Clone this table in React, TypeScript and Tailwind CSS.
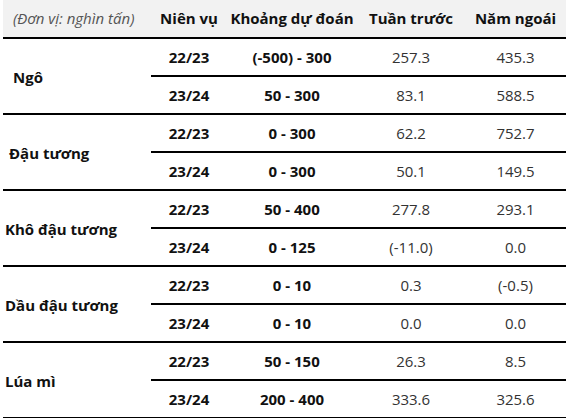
type Row = { season: string; range: string; lastWeek: string; lastYear: string };
type Group = { name: string; pad: string; rows: Row[] };

const groups: Group[] = [
  {
    name: "Ngô",
    pad: "pl-[10px]",
    rows: [
      { season: "22/23", range: "(-500) - 300", lastWeek: "257.3", lastYear: "435.3" },
      { season: "23/24", range: "50 - 300", lastWeek: "83.1", lastYear: "588.5" },
    ],
  },
  {
    name: "Đậu tương",
    pad: "pl-[6px]",
    rows: [
      { season: "22/23", range: "0 - 300", lastWeek: "62.2", lastYear: "752.7" },
      { season: "23/24", range: "0 - 300", lastWeek: "50.1", lastYear: "149.5" },
    ],
  },
  {
    name: "Khô đậu tương",
    pad: "pl-[2px]",
    rows: [
      { season: "22/23", range: "50 - 400", lastWeek: "277.8", lastYear: "293.1" },
      { season: "23/24", range: "0 - 125", lastWeek: "(-11.0)", lastYear: "0.0" },
    ],
  },
  {
    name: "Dầu đậu tương",
    pad: "pl-[2px]",
    rows: [
      { season: "22/23", range: "0 - 10", lastWeek: "0.3", lastYear: "(-0.5)" },
      { season: "23/24", range: "0 - 10", lastWeek: "0.0", lastYear: "0.0" },
    ],
  },
  {
    name: "Lúa mì",
    pad: "pl-[2px]",
    rows: [
      { season: "22/23", range: "50 - 150", lastWeek: "26.3", lastYear: "8.5" },
      { season: "23/24", range: "200 - 400", lastWeek: "333.6", lastYear: "325.6" },
    ],
  },
];

export default function App() {
  return (
    <div className="w-[571px] h-[418px] bg-white pl-[3px] font-['Open_Sans',sans-serif] text-[15px] overflow-hidden">
      <table className="w-[563px] border-collapse table-fixed">
        <colgroup>
          <col className="w-[148px]" />
          <col className="w-[76px]" />
          <col className="w-[130px]" />
          <col className="w-[108px]" />
          <col className="w-[101px]" />
        </colgroup>
        <thead>
          <tr className="h-[38px] bg-[#f2f2f2] border-b-2 border-[#000]">
            <th className="text-left pl-[10px] font-normal italic text-[#555] whitespace-nowrap">
              (Đơn vị: nghìn tấn)
            </th>
            <th className="font-bold text-[#111] whitespace-nowrap">Niên vụ</th>
            <th className="font-bold text-[#111] whitespace-nowrap">Khoảng dự đoán</th>
            <th className="font-bold text-[#111] whitespace-nowrap">Tuần trước</th>
            <th className="font-bold text-[#111] whitespace-nowrap">Năm ngoái</th>
          </tr>
        </thead>
        <tbody>
          {groups.map((g) =>
            g.rows.map((r, i) => (
              <tr key={g.name + r.season} className="h-[38px] border-b-2 border-[#000]">
                {i === 0 && (
                  <td
                    rowSpan={2}
                    className={`text-left ${g.pad} pt-[2px] font-bold text-[#111] whitespace-nowrap border-b-2 border-[#000]`}
                  >
                    {g.name}
                  </td>
                )}
                <td className="text-center font-bold text-[#111]">{r.season}</td>
                <td className="text-center font-bold text-[#111] whitespace-nowrap">{r.range}</td>
                <td className="text-center text-[#333]">{r.lastWeek}</td>
                <td className="text-center text-[#333]">{r.lastYear}</td>
              </tr>
            ))
          )}
        </tbody>
      </table>
    </div>
  );
}
